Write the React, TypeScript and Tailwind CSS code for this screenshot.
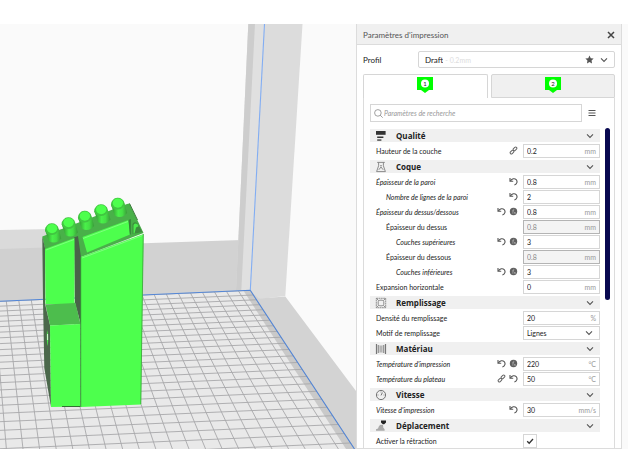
import { useState } from "react";
import type { ReactNode } from "react";

type Hint = "reset" | "link" | "formula";

type Setting = {
  id: string;
  label: string;
  level?: 0 | 1 | 2;
  changed?: boolean;
  hints?: Hint[];
  value: string;
  unit?: string;
  kind?: "text" | "select" | "check";
  disabled?: boolean;
};

type Category = {
  name: string;
  icon: ReactNode;
  settings: Setting[];
};

const indent = ["pl-[6px]", "pl-4", "pl-[26px]"];

const icons = {
  quality: (
    <svg viewBox="0 0 12 12" className="size-3" fill="#333">
      <rect x="1" y="1" width="9.6" height="3.8" />
      <rect x="2.2" y="6.5" width="6.2" height="1.5" />
      <rect x="2.2" y="9.4" width="4.2" height="1.3" />
    </svg>
  ),
  shell: (
    <svg viewBox="0 0 12 12" className="size-3" fill="none" stroke="#808080" strokeWidth="0.9">
      <path d="M2.2 1.4h7.6M3.6 1.4v3.4L1.6 10.6h8.8L8.4 4.8V1.4M5 4.800h2M3.800 8.800 6 6l2.200 2.800" />
    </svg>
  ),
  infill: (
    <svg viewBox="0 0 12 12" className="size-3" fill="none" stroke="#777" strokeWidth="0.8">
      <rect x="1.3" y="1.3" width="9.4" height="9.4" strokeDasharray="1.8 0.5" />
      <path d="M4.6 3.2h2.8l1.4 1.4v2.8L7.4 8.8H4.6L3.2 7.4V4.6zM1.6 1.6l2.2 2.2M10.4 1.6 8.2 3.8M1.6 10.4l2.2-2.2M10.4 10.4 8.2 8.2" />
    </svg>
  ),
  material: (
    <svg viewBox="0 0 12 12" className="size-3" fill="none" stroke="#777">
      <path d="M1.5 1v10M10.5 1v10" strokeWidth="1.2" />
      <path d="M3.4 2v8M8.6 2v8" strokeWidth="1.5" stroke="#999" />
      <path d="M5.2 2.5v7M6.8 2.5v7" strokeWidth="0.7" />
    </svg>
  ),
  speed: (
    <svg viewBox="0 0 12 12" className="size-3" fill="none" stroke="#666" strokeWidth="0.9">
      <circle cx="6" cy="6" r="4.6" />
      <path d="M6 6.4 7.4 3.6M6 2.6v.8M2.6 6h.8M8.6 6h.8" />
    </svg>
  ),
  travel: (
    <svg viewBox="0 0 12 12" className="size-3">
      <path d="M6 .6h5v1.8L9.2 4.2H7.8L6 2.4z" fill="#222" />
      <path d="M1 10.8V9.2l2-.6 1-2.6h4.2v1.4l1.4 1.8v1.6z" fill="#aaa" />
      <path d="M4.6 5.4H8" stroke="#888" strokeWidth="0.8" />
    </svg>
  ),
};

const categories: Category[] = [
  {
    name: "Qualité",
    icon: icons.quality,
    settings: [
      { id: "layer-height", label: "Hauteur de la couche", hints: ["link"], value: "0.2", unit: "mm" },
    ],
  },
  {
    name: "Coque",
    icon: icons.shell,
    settings: [
      { id: "wall", label: "Épaisseur de la paroi", changed: true, hints: ["reset"], value: "0.8", unit: "mm" },
      { id: "wall-lines", label: "Nombre de lignes de la paroi", level: 1, changed: true, hints: ["reset"], value: "2" },
      { id: "top-bottom", label: "Épaisseur du dessus/dessous", changed: true, hints: ["reset", "formula"], value: "0.8", unit: "mm" },
      { id: "top", label: "Épaisseur du dessus", level: 1, value: "0.8", unit: "mm", disabled: true },
      { id: "top-layers", label: "Couches supérieures", level: 2, changed: true, hints: ["reset", "formula"], value: "3" },
      { id: "bottom", label: "Épaisseur du dessous", level: 1, value: "0.8", unit: "mm", disabled: true },
      { id: "bottom-layers", label: "Couches inférieures", level: 2, changed: true, hints: ["reset", "formula"], value: "3" },
      { id: "expansion", label: "Expansion horizontale", value: "0", unit: "mm" },
    ],
  },
  {
    name: "Remplissage",
    icon: icons.infill,
    settings: [
      { id: "density", label: "Densité du remplissage", value: "20", unit: "%" },
      { id: "pattern", label: "Motif de remplissage", value: "Lignes", kind: "select" },
    ],
  },
  {
    name: "Matériau",
    icon: icons.material,
    settings: [
      { id: "print-temp", label: "Température d'impression", changed: true, hints: ["reset", "formula"], value: "220", unit: "°C" },
      { id: "bed-temp", label: "Température du plateau", changed: true, hints: ["link", "reset"], value: "50", unit: "°C" },
    ],
  },
  {
    name: "Vitesse",
    icon: icons.speed,
    settings: [
      { id: "print-speed", label: "Vitesse d'impression", changed: true, hints: ["reset"], value: "30", unit: "mm/s" },
    ],
  },
  {
    name: "Déplacement",
    icon: icons.travel,
    settings: [{ id: "retraction", label: "Activer la rétraction", value: "on", kind: "check" }],
  },
];

function Chevron() {
  return (
    <svg viewBox="0 0 8 8" className="size-2 shrink-0" fill="none" stroke="#555" strokeWidth="1.1">
      <path d="M1 2.4 4 5.4l3-3" />
    </svg>
  );
}

function HintIcon({ hint }: { hint: Hint }) {
  if (hint === "link") {
    return (
      <svg viewBox="0 0 9 9" className="size-[9px]" fill="none" stroke="#666" strokeWidth="1">
        <rect x="3.9" y="1.7" width="4.2" height="2.4" rx="1.2" transform="rotate(-45 6 2.9)" />
        <rect x="0.9" y="4.9" width="4.2" height="2.4" rx="1.2" transform="rotate(-45 3 6.1)" />
      </svg>
    );
  }
  if (hint === "formula") {
    return (
      <svg viewBox="0 0 9 9" className="size-[9px]" fill="none">
        <circle cx="4.5" cy="4.5" r="3.7" fill="#606060" />
        <path d="M5.4 2.2c-1.2-.3-1.2.6-1.3 1.4L3.7 6.6M3.3 3.8h1.8M5 5l1.6 1.8M6.6 5 5 6.8" stroke="#ccc" strokeWidth="0.5" />
      </svg>
    );
  }
  return (
    <svg viewBox="0 0 9 9" className="size-[9px]" fill="none" stroke="#555" strokeWidth="1.1">
      <path d="M1.4 3.9C3 1.6 5.6 1.1 7.2 2.6 8.8 4.4 8 7.2 5.4 8" />
      <path d="M1 1v3.2h3.2" />
    </svg>
  );
}

function Field({ setting }: { setting: Setting }) {
  const [value, setValue] = useState(setting.value);

  if (setting.kind === "check") {
    return (
      <span className="relative flex size-[14px] items-center justify-center border border-[#d6d6d6] bg-white">
        <input id={setting.id} type="checkbox" defaultChecked className="peer absolute inset-0 appearance-none" />
        <svg viewBox="0 0 8 8" className="pointer-events-none invisible size-2 peer-checked:visible" fill="none" stroke="#333" strokeWidth="1.3">
          <path d="m1.2 4.2 2 2L7 2" />
        </svg>
      </span>
    );
  }

  if (setting.kind === "select") {
    return (
      <span className="flex h-[14px] items-center border border-[#d6d6d6] bg-white pr-1.5 pl-[3px]">
        <select id={setting.id} className="min-w-0 flex-1 appearance-none leading-3 outline-none">
          <option>{setting.value}</option>
          <option>Grille</option>
          <option>Triangles</option>
        </select>
        <Chevron />
      </span>
    );
  }

  return (
    <span
      className={
        setting.disabled
          ? "flex h-[14px] items-center border border-[#b4b4b4] bg-[#f4f4f4] px-[3px] text-[#888]"
          : "flex h-[14px] items-center border border-[#d6d6d6] bg-white px-[3px]"
      }
    >
      <input
        id={setting.id}
        value={value}
        disabled={setting.disabled}
        onChange={(e) => setValue(e.target.value)}
        className="min-w-0 flex-1 leading-3 outline-none"
      />
      <span className="text-[#999]">{setting.unit}</span>
    </span>
  );
}

function SettingRow({ setting }: { setting: Setting }) {
  return (
    <div className={`flex h-[15px] items-center ${indent[setting.level ?? 0]}`}>
      <label htmlFor={setting.id} className={`flex-1 whitespace-nowrap ${setting.changed ? "italic" : ""}`}>
        {setting.label}
      </label>
      <div className="flex gap-[3px] pr-[5px]">
        {setting.hints?.map((hint) => (
          <button key={hint} type="button" aria-label={hint}>
            <HintIcon hint={hint} />
          </button>
        ))}
      </div>
      <div className="w-[77px] shrink-0">
        <Field setting={setting} />
      </div>
    </div>
  );
}

function ExtruderBadge({ n }: { n: number }) {
  return (
    <svg viewBox="0 0 16 16" className="size-4">
      <path d="M0 0h16v13h-4l-4 3-4-3H0z" fill="#00ff00" />
      <circle cx="8" cy="6.5" r="4" fill="#fff" />
      <text x="8" y="8.8" textAnchor="middle" fontSize="6" fill="#222">
        {n}
      </text>
    </svg>
  );
}

const columns = Array.from({ length: 22 }, (_, k) => {
  const x = 250.3 - 11.9 * k - 0.015 * k * k;
  return { x1: x, y1: 301.3 - x * 0.044, x2: 355 - 16.6 * k, y2: 449 };
});

const rows = Array.from({ length: 26 }, (_, j) => -46.8 + 25767 / (74 - j));

const knobs = [
  [117.7, 204.5],
  [101, 211],
  [84.7, 217.5],
  [68.4, 224],
  [51.8, 230],
];

function Scene() {
  return (
    <svg viewBox="0 24 356 425" preserveAspectRatio="xMinYMin slice" className="block size-full" role="img" aria-label="Modèle 3D">
      <defs>
        <clipPath id="plate">
          <path d="M0 301.3 250.3 290.3 355 449H0z" />
        </clipPath>
        <linearGradient id="knob" x1="0" x2="1">
          <stop offset="0" stopColor="#2f8a2f" />
          <stop offset="0.45" stopColor="#4af04a" />
          <stop offset="0.7" stopColor="#45e045" />
          <stop offset="1" stopColor="#3a9a3a" />
        </linearGradient>
      </defs>
      <rect y="24" width="356" height="425" fill="#fafafa" />

      {/* build volume walls */}
      <path d="M0 230 130 227.5V296L0 301.3z" fill="#dadada" />
      <path d="M0 249 60 247V299L0 301.3z" fill="#d0d0d0" />
      <path d="M60 246 242 240V291L60 299z" fill="#d2d2d2" />
      <path d="M248.3 24H264.5L250.3 290.3 236 291z" fill="#e0e0e0" />
      <path d="M248.3 24H255L241.3 291H236z" fill="#cdcdcd" />
      <path d="M264.5 24H302.5L285.3 296 259 299 250.3 290.3z" fill="#dcdcdc" />
      <path d="M259 298.5 285.3 296.5 356 391V449H354.5L250.3 290.3z" fill="#d3d3d3" />

      {/* build plate */}
      <g clipPath="url(#plate)">
        <rect y="285" width="356" height="164" fill="#e9e9e9" />
        <path d="M250.3 290.3 355 449H346L243 290z" fill="#c9c9c9" />
        <g stroke="#a8a8aa" strokeWidth="0.9">
          {columns.map((c) => (
            <line key={c.x2} {...c} />
          ))}
          {rows.map((y) => (
            <line key={y} x1="0" y1={y} x2="356" y2={y - 15.7} />
          ))}
        </g>
      </g>
      <g fill="none" strokeWidth="1.1">
        <path d="M0 301.3 250.3 290.3 354.5 449" stroke="#5386d6" />
        <path d="M264.5 24 250.3 290.3" stroke="#82adf2" />
      </g>

      {/* model */}
      <path d="M42.3 236.5 127 204 129.5 203.5 143.5 233 81 257 75 250 45 249z" fill="#49b049" />
      <path d="M42.3 236.5 45 248V304L50 325 51 407 44.3 368 43 300z" fill="#4b684b" />
      <path d="M74 237.5 78 236 81 257V325L75 303z" fill="#496349" />
      <path d="M45 249 74.5 238V304H45.5z" fill="#4dff4d" />
      <path d="M45.5 304.5 75.5 303 80.5 324 50 325.5z" fill="#4dbd4d" />
      <path d="M50 325.5 80.5 324V406.5L51 407z" fill="#4dff4d" />
      <path d="M81 257 143.5 234 141 404.5 81 407z" fill="#4dff4d" />
      <path d="M82.5 237 128.5 220 130 234.5 87 252.5z" fill="#4dff4d" />
      <path d="M128.5 220 130.8 219V234.5H129.8z" fill="#37803a" />
      <path d="M132.5 234V224q2-3 5-.5L142.5 232z" fill="#3d8c3d" />
      <path d="M133.5 225q1.5-2.5 4-.7l1 2-2.5 1.2-1.5 6h-1z" fill="#4dea4d" />
      <path d="M129.5 203.5 137.5 220" stroke="#3b7a3b" strokeWidth="1" />
      <path d="M46 250 74 239.5M82 258 142.5 235.5M83 238.5 128 221.5" stroke="#7dff7d" strokeWidth="1" />
      <path d="M80.7 257V407" stroke="#389038" strokeWidth="1" />
      <path d="M62 406.5h18" stroke="#337033" strokeWidth="1" />
      <path d="M143.3 234 142.3 300 140.8 404" fill="none" stroke="#3aa03a" strokeWidth="0.8" />
      <path d="M47 330q1.8 5 .8 16-1.5-4-.8-16z" fill="#4dea4d" />
      <path d="M47.6 334v6" stroke="#fff" strokeWidth="0.8" />
      {knobs.map(([x, y]) => (
        <g key={x}>
          <path d={`M${x - 6.8} ${y} L${x - 3} ${y + 11} Q${x + 4} ${y + 15} ${x + 9.5} ${y + 8.5} L${x + 6.9} ${y - 1}z`} fill="url(#knob)" />
          <path d={`M${x - 6.8} ${y} a6.9 6.8 0 0 1 13.7 -1 q-1 5.5 -6.4 6 q-6 0.5 -7.3 -5z`} fill="#41c641" />
          <ellipse cx={x + 0.2} cy={y - 1.4} rx="5.2" ry="4.6" fill="#4dff4d" />
        </g>
      ))}
    </svg>
  );
}

export default function App() {
  return (
    <div className="min-h-screen bg-white py-6 font-['Lato','Open_Sans',sans-serif] text-[7px] leading-3 text-[#222]">
      <main className="flex bg-[#fafafa] pr-1.5">
        <div className="relative min-w-0 flex-1">
          <div className="absolute inset-0 overflow-hidden">
            <Scene />
          </div>
        </div>

        <aside className="w-[266px] shrink-0 border-x border-[#dcdcdc] bg-white">
          <header className="flex h-[21px] items-center justify-between border-y border-t-[#f0f0f0] border-b-[#dcdcdc] bg-[#f0f0f0] px-1.5">
            <h1 className="text-[8px] text-[#555]">Paramètres d'impression</h1>
            <button type="button" aria-label="Fermer">
              <svg viewBox="0 0 8 8" className="size-2" stroke="#444" strokeWidth="1.5">
                <path d="m1 1 6 6M7 1 1 7" />
              </svg>
            </button>
          </header>

          <div className="px-1.5 pt-1.5">
            <div className="flex items-center">
              <label htmlFor="profile" className="w-[55px] text-[8px]">
                Profil
              </label>
              <div className="flex h-[17px] flex-1 items-center rounded-xs border border-[#d6d6d6] px-1.5 text-[8px]">
                <select id="profile" className="appearance-none outline-none [field-sizing:content]">
                  <option>Draft</option>
                </select>
                <span className="flex-1 pl-0.5 text-[7px] text-[#ddd]">- 0.2mm</span>
                <svg viewBox="0 0 10 10" className="mr-1.5 size-[9px]" fill="#555">
                  <path d="m5 .6 1.4 2.9 3.2.4-2.3 2.3.5 3.2L5 7.9 2.2 9.4l.5-3.2L.4 3.9l3.2-.4z" />
                </svg>
                <Chevron />
              </div>
            </div>

            <div role="tablist" className="mt-1.5 flex gap-[3px]">
              <button type="button" role="tab" aria-selected="true" aria-label="Extrudeuse 1" className="flex h-6 flex-1 justify-center rounded-t-xs border border-b-0 border-[#d6d6d6] bg-white pt-[2px]">
                <ExtruderBadge n={1} />
              </button>
              <button type="button" role="tab" aria-selected="false" aria-label="Extrudeuse 2" className="flex h-6 flex-1 justify-center rounded-t-xs border border-[#d6d6d6] bg-[#f0f0f0] pt-[2px]">
                <ExtruderBadge n={2} />
              </button>
            </div>

            <div className="border-x border-[#dcdcdc] pt-1.5 pr-1 pl-1.5">
              <div className="flex items-center">
                <label className="flex h-[18px] w-[212px] items-center gap-px border border-[#d6d6d6] px-[3px]">
                  <svg viewBox="0 0 9 9" className="size-[9px] shrink-0" fill="none" stroke="#888" strokeWidth="0.8">
                    <circle cx="3.9" cy="3.9" r="3.3" />
                    <path d="m6.2 6.2 2.5 2.5" />
                  </svg>
                  <input
                    aria-label="Paramètres de recherche"
                    placeholder="Paramètres de recherche"
                    className="min-w-0 flex-1 italic outline-none placeholder:text-[#999]"
                  />
                </label>
                <button type="button" aria-label="Menu" className="ml-[6px]">
                  <svg viewBox="0 0 8 8" className="size-2" stroke="#555">
                    <path d="M.5 1.5h7M.5 4h7M.5 6.5h7" />
                  </svg>
                </button>
              </div>

              <div className="mt-1.5 flex gap-[5px]">
                <div className="flex min-w-0 flex-1 flex-col gap-px">
                  {categories.map((category) => (
                    <section key={category.name}>
                      <h2 className="h-[15px] py-px font-['Open_Sans','Noto_Sans',sans-serif] text-[8px] font-bold">
                        <button type="button" aria-expanded="true" className="flex h-[13px] w-full items-center gap-[9px] bg-[#f0f0f0] pr-1.5 pl-[5px]">
                          {category.icon}
                          <span className="flex-1 text-left">{category.name}</span>
                          <Chevron />
                        </button>
                      </h2>
                      {category.settings.map((setting) => (
                        <SettingRow key={setting.id} setting={setting} />
                      ))}
                    </section>
                  ))}
                </div>
                <div className="h-[172px] w-[5px] rounded-full bg-[#080850]" />
              </div>
            </div>
          </div>
          <div className="h-px bg-[#dcdcdc]" />
        </aside>
      </main>
    </div>
  );
}
